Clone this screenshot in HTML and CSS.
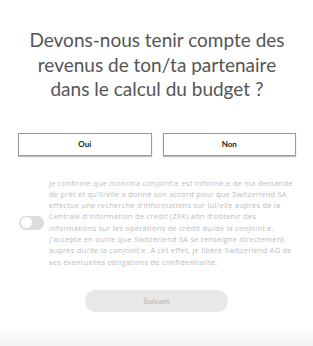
FILE: index.html
```html
<!DOCTYPE html>
<html lang="fr">
  <head>
    <meta charset="utf-8" />
    <meta name="viewport" content="width=device-width, initial-scale=1" />
    <title>Budget</title>
    <link rel="stylesheet" href="styles.css">
  </head>
  <body>
    <div class="page">
      <h1 class="question">Devons-nous tenir compte des<br>revenus de ton/ta partenaire<br>dans le calcul du budget ?</h1>

      <div class="choices">
        <button class="choice" type="button">Oui</button>
        <button class="choice" type="button">Non</button>
      </div>

      <div class="consent">
        <span class="toggle"><span class="knob"></span></span>
        <p class="consent-text">Je confirme que mon/ma conjoint:e est informé:e de ma demande<br>de prêt et qu'il/elle a donné son accord pour que Switzerlend SA<br>effectue une recherche d'informations sur lui/elle auprès de la<br>Centrale d'information de crédit (ZEK) afin d'obtenir des<br>informations sur les opérations de crédit du/de la conjoint:e.<br>J'accepte en outre que Switzerlend SA se renseigne directement<br>auprès du/de la conjoint:e. A cet effet, je libère Switzerlend AG de<br>ses éventuelles obligations de confidentialité.</p>
      </div>

      <div class="actions">
        <button class="next" type="button" disabled>Suivant</button>
      </div>
    </div>
    <div class="footer-fade"></div>
  </body>
</html>
```

FILE: styles.css
```css
*,
*::before,
*::after {
  box-sizing: border-box;
  margin: 0;
}

body {
  background: #fff;
  color: #555;
  font-family: Lato, "Open Sans", sans-serif;
  height: 346px;
  overflow: hidden;
  position: relative;
}

.page {
  padding: 28px 17px 0 18px;
}

.question {
  font-size: 19px;
  font-weight: 400;
  line-height: 24.5px;
  text-align: center;
  white-space: nowrap;
}

.choices {
  display: flex;
  gap: 11px;
  margin-top: 31px;
}

.choice {
  background: #fff;
  border: 1px solid #9a9a9a;
  box-shadow: 0 1px 1px rgba(0, 0, 0, 0.25);
  color: #222;
  flex: 1;
  font-family: inherit;
  font-size: 8px;
  font-weight: 700;
  height: 23px;
}

.consent {
  align-items: center;
  display: flex;
  gap: 5px;
  margin-top: 22px;
}

.toggle {
  background: #dcdcdc;
  border-radius: 7px;
  flex: none;
  height: 14px;
  margin-left: 1px;
  padding: 1.5px;
  width: 25px;
}

.knob {
  background: #fff;
  border-radius: 50%;
  display: block;
  height: 11px;
  width: 11px;
}

.consent-text {
  color: #bdbdbd;
  font-family: "Open Sans", sans-serif;
  font-size: 7.4px;
  letter-spacing: 0.27px;
  line-height: 11.3px;
  white-space: nowrap;
}

.actions {
  display: flex;
  justify-content: center;
  margin-top: 22px;
  padding-right: 1px;
}

.next {
  background: #e8e8e8;
  border: none;
  border-radius: 11px;
  color: #c2c2c2;
  font-family: inherit;
  font-size: 8px;
  font-weight: 700;
  height: 22px;
  width: 143px;
}

.footer-fade {
  background: linear-gradient(#fff, #f2f2f2);
  bottom: 0;
  height: 18px;
  left: 0;
  position: absolute;
  right: 0;
}
```
